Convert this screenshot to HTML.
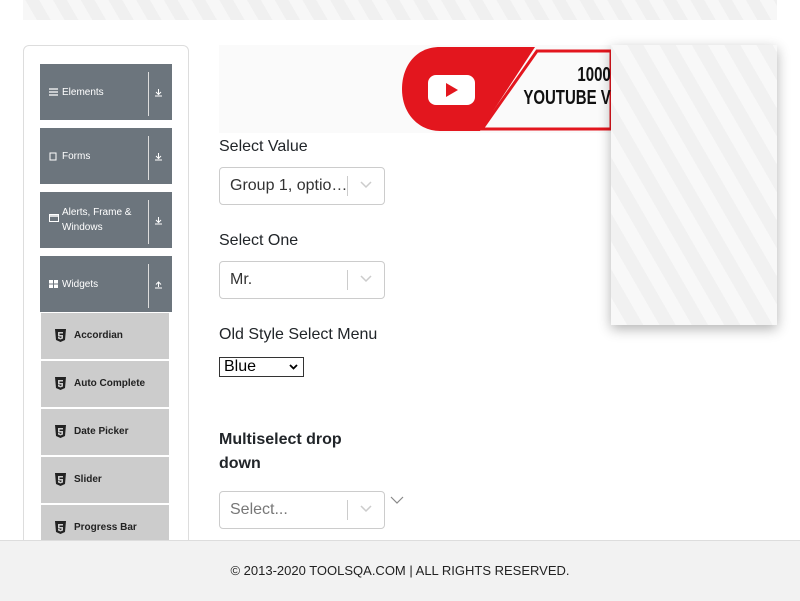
<!DOCTYPE html><html><head><style>
body{margin:0;width:800px;height:600px;overflow:hidden;background:#fff;font-family:"Liberation Sans",sans-serif;position:relative}
.a{position:absolute}
.m{position:absolute;left:40px;width:132px;height:56px;background:#6c757d;color:#fff;font-size:10px}
.m .t{position:absolute;left:22px;top:0;bottom:0;display:flex;align-items:center;line-height:15px}
.m .i{position:absolute;left:9px;top:0;bottom:0;display:flex;align-items:center}
.m .d{position:absolute;left:108px;top:8px;width:1px;height:44px;background:#ddd}
.m .r{position:absolute;left:114px;top:0;bottom:0;display:flex;align-items:center}
.s{position:absolute;left:41px;width:128px;height:46px;background:#ccc;color:#222;font-size:10px;font-weight:bold}
.s span{position:absolute;left:33px;top:17px}
.s svg{position:absolute;left:14px;top:16px}
.l{position:absolute;left:219px;font-size:16px;color:#212529}
.sel{position:absolute;left:219px;width:164px;height:36px;border:1px solid #ccc;border-radius:4px;font-size:16px;color:#333}
.sel span{position:absolute;left:10px;top:9px}
.sel .d{position:absolute;left:127px;top:8px;width:1px;height:20px;background:#ccc}
.sel svg{position:absolute;left:140px;top:13px}
</style></head><body>
<div class="a" style="left:23px;top:0;width:754px;height:20px;background:repeating-linear-gradient(60deg,#f7f7f7 0 12px,#f0f0f0 12px 24px)"></div>
<div class="a" style="left:23px;top:45px;width:164px;height:520px;border:1px solid #ddd;border-radius:6px"></div>
<svg width="0" height="0" style="position:absolute"><defs>
<g id="dn"><path d="M1 8H8M4.5 1V6M2 4L4.5 6.5L7 4" fill="none" stroke="#fff" stroke-width="1"/></g>
<g id="up"><path d="M1 8H8M4.5 7V2M2 4.5L4.5 2L7 4.5" fill="none" stroke="#fff" stroke-width="1"/></g>
<g id="h"><path d="M0 0H11L10 11L5.5 13L1 11Z" fill="#222"/><path d="M3 3H8V4.5H4.5V6H8V9.5L5.5 10.5L3 9.5V8H4.5V8.5L5.5 9L6.5 8.5V7.5H3Z" fill="#ccc"/></g></defs></svg>
<div class="m" style="top:64px"><div class="i"><svg width="9" height="8"><path d="M0 1H9M0 4H9M0 7H9" stroke="#fff" stroke-width="1.3"/></svg></div><div class="t">Elements</div><div class="d"></div><div class="r"><svg width="9" height="9"><use href="#dn"/></svg></div></div>
<div class="m" style="top:128px"><div class="i"><svg width="8" height="9"><rect x="1" y="1" width="6" height="7" fill="none" stroke="#fff"/></svg></div><div class="t">Forms</div><div class="d"></div><div class="r"><svg width="9" height="9"><use href="#dn"/></svg></div></div>
<div class="m" style="top:192px"><div class="i" style="align-items:flex-start;top:22px"><svg width="10" height="8"><rect x="0.5" y="0.5" width="9" height="7" fill="none" stroke="#fff"/><path d="M0 2H10" stroke="#fff" stroke-width="1.5"/></svg></div><div class="t">Alerts, Frame &amp;<br>Windows</div><div class="d"></div><div class="r"><svg width="9" height="9"><use href="#dn"/></svg></div></div>
<div class="m" style="top:256px"><div class="i"><svg width="9" height="8"><path d="M0 0H4V3.5H0ZM5 0H9V3.5H5ZM0 4.5H4V8H0ZM5 4.5H9V8H5Z" fill="#fff"/></svg></div><div class="t">Widgets</div><div class="d"></div><div class="r"><svg width="9" height="9"><use href="#up"/></svg></div></div>
<div class="s" style="top:313px"><svg width="11" height="13"><use href="#h"/></svg><span>Accordian</span></div>
<div class="s" style="top:361px"><svg width="11" height="13"><use href="#h"/></svg><span>Auto Complete</span></div>
<div class="s" style="top:409px"><svg width="11" height="13"><use href="#h"/></svg><span>Date Picker</span></div>
<div class="s" style="top:457px"><svg width="11" height="13"><use href="#h"/></svg><span>Slider</span></div>
<div class="s" style="top:505px"><svg width="11" height="13"><use href="#h"/></svg><span>Progress Bar</span></div>
<div class="a" style="left:219px;top:45px;width:392px;height:88px;background:#fafafa"></div>
<svg class="a" style="left:400px;top:45px" width="211" height="88"><path d="M135 2H40C15 2 2 22 2 44C2 70 20 86 40 86H80L135 2Z" fill="#e3161e"/><path d="M137 6H211V84H82Z" fill="none" stroke="#e3161e" stroke-width="3"/><rect x="28" y="30" width="47" height="30" rx="8" fill="#fff"/><path d="M46 38L58 45L46 52Z" fill="#e3161e"/><g transform="scale(0.75,1)"><text x="281" y="36" text-anchor="end" font-size="20" font-weight="bold" fill="#111">1000</text><text x="281" y="59" text-anchor="end" font-size="20" font-weight="bold" fill="#111">YOUTUBE V</text></g></svg>
<div class="a" style="left:611px;top:45px;width:166px;height:280px;background:repeating-linear-gradient(60deg,#f8f8f8 0 14px,#f1f1f1 14px 28px);box-shadow:0 4px 12px rgba(0,0,0,.3)"></div>
<div class="l" style="top:138px">Select Value</div>
<div class="sel" style="top:167px"><span>Group 1, optio…</span><div class="d"></div><svg width="12" height="8"><path d="M1 1L6 6L11 1" fill="none" stroke="#ccc" stroke-width="1.5"/></svg></div>
<div class="l" style="top:232px">Select One</div>
<div class="sel" style="top:261px"><span>Mr.</span><div class="d"></div><svg width="12" height="8"><path d="M1 1L6 6L11 1" fill="none" stroke="#ccc" stroke-width="1.5"/></svg></div>
<div class="l" style="top:326px">Old Style Select Menu</div>
<div class="a" style="left:219px;top:357px;width:83px;height:18px;border:1px solid #333;font-size:16px;line-height:18px"><span style="margin-left:4px">Blue</span><svg style="position:absolute;right:5px;top:6px" width="9" height="6"><path d="M1 1L4.5 4.5L8 1" fill="none" stroke="#000" stroke-width="1.8"/></svg></div>
<div class="l" style="top:428px;font-weight:bold;line-height:24px">Multiselect drop<br>down</div>
<div class="sel" style="top:491px"><span style="color:#777">Select...</span><div class="d"></div><svg width="12" height="8"><path d="M1 1L6 6L11 1" fill="none" stroke="#ccc" stroke-width="1.5"/></svg></div>
<svg class="a" style="left:390px;top:496px" width="14" height="9"><path d="M1 1L7 7L13 1" fill="none" stroke="#888" stroke-width="1.2"/></svg>
<div class="a" style="left:0;top:540px;width:800px;height:60px;background:#f2f2f2;border-top:1px solid #ddd;text-align:center;font-size:13px;line-height:60px;color:#222">© 2013-2020 TOOLSQA.COM | ALL RIGHTS RESERVED.</div>
</body></html>
